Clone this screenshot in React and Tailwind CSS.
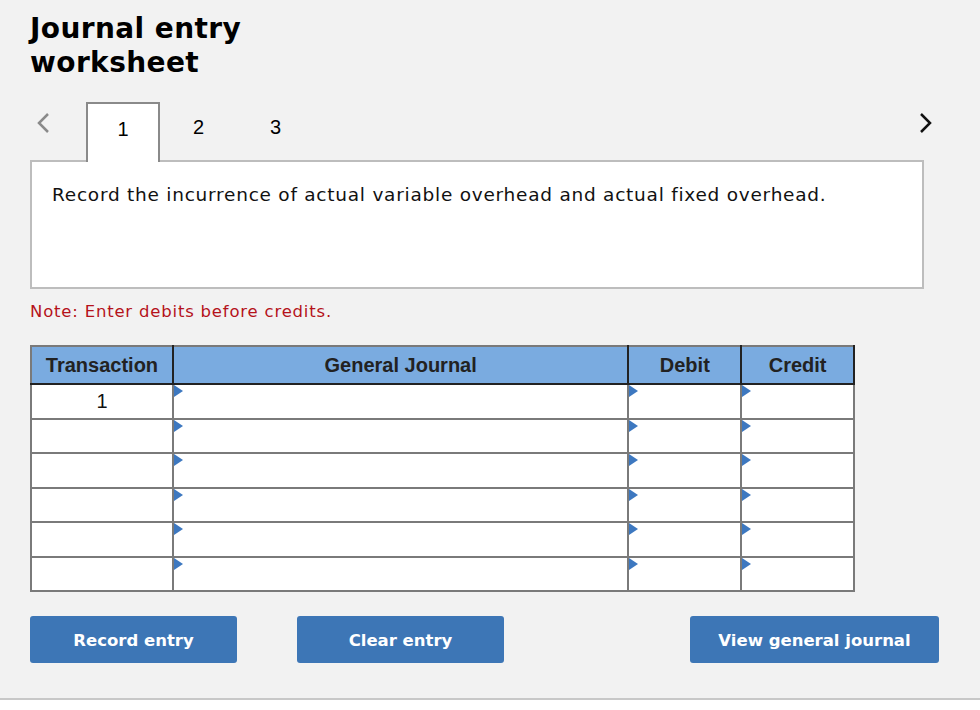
import React from 'react'

const rows = [1, 2, 3, 4, 5, 6]

function Marker() {
  return (
    <svg width="9" height="12" viewBox="0 0 9 12" className="absolute left-0 top-0">
      <polygon points="0,0 9,6 0,12" fill="#3d78c0" />
    </svg>
  )
}

export default function App() {
  return (
    <div className="w-[980px] h-[710px] bg-white" style={{ fontFamily: '"DejaVu Sans", Verdana, sans-serif' }}>
      <div className="h-[700px] bg-[#f2f2f2] border-b-2 border-[#c8c8c8] px-[30px] pt-[12px]">
        <h1 className="text-[28px] leading-[34px] font-bold tracking-[0.4px] text-black w-[260px]">Journal entry worksheet</h1>

        {/* step tabs */}
        <div className="mt-[20px] flex items-end h-[60px] relative z-10 w-[894px]">
          <div className="w-[56px] h-full flex items-start pt-[12px] pl-[5px]">
            <svg width="16" height="22" viewBox="0 0 16 22">
              <polyline points="13,2 4,11 13,20" fill="none" stroke="#8a8a8a" strokeWidth="2.5" />
            </svg>
          </div>
          <div className="w-[74px] h-[60px] -mb-[2px] bg-white border-2 border-b-0 border-[#8a8a8a] text-center pt-[10px] text-[20px] text-black" style={{ fontFamily: '"Liberation Sans", Arial, sans-serif' }}>1</div>
          <div className="w-[77px] h-full text-center pt-[12px] text-[20px] text-black" style={{ fontFamily: '"Liberation Sans", Arial, sans-serif' }}>2</div>
          <div className="w-[77px] h-full text-center pt-[12px] text-[20px] text-black" style={{ fontFamily: '"Liberation Sans", Arial, sans-serif' }}>3</div>
          <div className="ml-auto h-full flex items-start pt-[12px] mr-[-10px]">
            <svg width="16" height="22" viewBox="0 0 16 22">
              <polyline points="3,2 12,11 3,20" fill="none" stroke="#111" strokeWidth="2.5" />
            </svg>
          </div>
        </div>

        <div className="w-[894px] h-[129px] bg-white border-2 border-[#bdbdbd] pl-[20px] pt-[21px]">
          <p className="text-[18.5px] leading-[24px] tracking-[0.75px] text-[#111]">Record the incurrence of actual variable overhead and actual fixed overhead.</p>
        </div>

        <p className="mt-[12px] text-[16.5px] leading-[22px] tracking-[0.8px] text-[#b5121b]">Note: Enter debits before credits.</p>

        <table className="mt-[22px] border-collapse border-2 border-[#7a7a7a] w-[825px] text-[20px]" style={{ fontFamily: '"Liberation Sans", Arial, sans-serif' }}>
          <thead>
            <tr className="bg-[#7aabe0] h-[38px]">
              <th className="w-[142px] border-2 border-[#222] border-l-[#7a7a7a] border-t-[#7a7a7a] font-bold text-[#222]">Transaction</th>
              <th className="w-[457px] border-2 border-[#222] border-t-[#7a7a7a] font-bold text-[#222]">General Journal</th>
              <th className="w-[113px] border-2 border-[#222] border-t-[#7a7a7a] font-bold text-[#222]">Debit</th>
              <th className="w-[113px] border-2 border-[#222] border-t-[#7a7a7a] font-bold text-[#222]">Credit</th>
            </tr>
          </thead>
          <tbody>
            {rows.map((r) => (
              <tr key={r} className="h-[34.5px] bg-white">
                <td className="border-2 border-[#7a7a7a] text-center text-[#111] align-middle">{r === 1 ? '1' : ''}</td>
                <td className="border-2 border-[#7a7a7a] relative p-0"><Marker /></td>
                <td className="border-2 border-[#7a7a7a] relative p-0"><Marker /></td>
                <td className="border-2 border-[#7a7a7a] relative p-0"><Marker /></td>
              </tr>
            ))}
          </tbody>
        </table>

        <div className="mt-[24px] flex items-center w-[909px]">
          <button className="w-[207px] h-[47px] pt-[3px] rounded-[3px] bg-[#3d76b6] text-white font-bold text-[16.5px]">Record entry</button>
          <button className="ml-[60px] w-[207px] h-[47px] pt-[3px] rounded-[3px] bg-[#3d76b6] text-white font-bold text-[16.5px]">Clear entry</button>
          <button className="ml-auto w-[249px] h-[47px] pt-[3px] rounded-[3px] bg-[#3d76b6] text-white font-bold text-[16.5px]">View general journal</button>
        </div>
      </div>
    </div>
  )
}
